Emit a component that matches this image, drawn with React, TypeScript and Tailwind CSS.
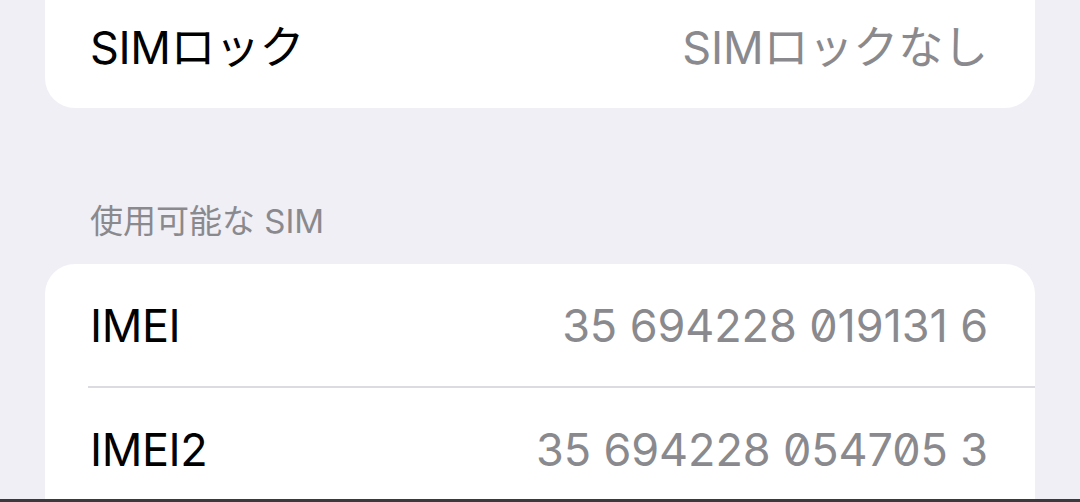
// App.tsx
const font = "font-['Inter','Noto_Sans_CJK_JP',sans-serif]";

interface RowProps {
  label: string;
  value: string;
  divider?: boolean;
}

const Row = ({ label, value, divider }: RowProps) => {
  return (
    <div className="relative shrink-0">
      <div className="flex h-[122px] items-center justify-between pl-[45px] pr-[47px]">
        <span className="text-[45px] leading-none text-black tracking-[-0.4px]">{label}</span>
        <span className="text-[45px] leading-none text-[#8a8a8e] slashed-zero tracking-[-0.1px]">
          {value}
        </span>
      </div>
      {divider && <div className="ml-[43px] h-[2px] bg-[#dcdce0]" />}
    </div>
  );
};

const App = () => {
  return (
    <div className={`flex h-[502px] w-[1080px] flex-col overflow-hidden bg-[#f0eff5] ${font}`}>
      {/* carrier lock group, scrolled partly out of view */}
      <div className="mx-[45px] mt-[-14px] shrink-0 rounded-b-[30px] bg-white">
        <Row label="SIMロック" value="SIMロックなし" />
      </div>

      <div className="mt-[97px] h-[59px] shrink-0 pl-[90px] text-[33px] leading-none text-[#8a8a8e]">
        使用可能な SIM
      </div>

      <div className="mx-[45px] min-h-0 flex-1 overflow-hidden rounded-t-[30px] bg-white">
        <Row label="IMEI" value="35 694228 019131 6" divider />
        <Row label="IMEI2" value="35 694228 054705 3" />
      </div>
      <div className="h-[3px] shrink-0 bg-[#3a3a3c]" />
    </div>
  );
};

export default App;
